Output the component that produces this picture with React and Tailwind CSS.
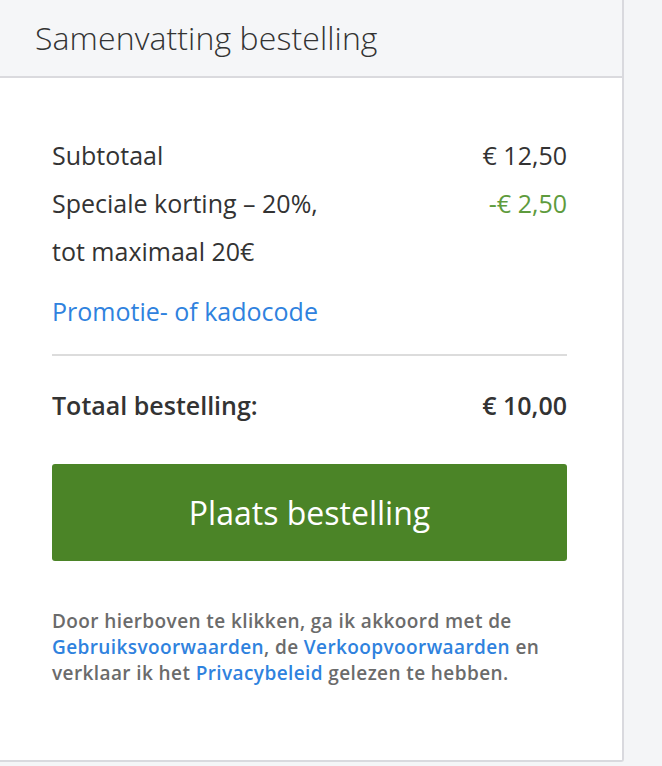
import React from 'react';

const font = { fontFamily: '"Open Sans", "Noto Sans", sans-serif' };

export default function App() {
  return (
    <div className="min-h-screen bg-[#f4f5f7]" style={font}>
      <div className="w-[624px] h-[762px] bg-white border-r-2 border-b-2 border-[#d9d9de] rounded-br-[3px]">
        {/* header */}
        <div className="h-[78px] bg-[#f5f6f8] border-b-2 border-[#dadade] pl-[35px] flex items-center">
          <h2 className="text-[32px] font-light text-[#333] tracking-[0.1px]">Samenvatting bestelling</h2>
        </div>

        <div className="pl-[52px] pr-[55px] pt-[53px] text-[#333]">
          <div className="flex justify-between text-[25px] leading-[48px]">
            <span>Subtotaal</span>
            <span>€ 12,50</span>
          </div>
          <div className="flex justify-between text-[25px] leading-[48px]">
            <span className="max-w-[300px]">Speciale korting – 20%, tot maximaal 20€</span>
            <span className="text-[#5e9b3d]">-€ 2,50</span>
          </div>
          <a href="#" className="block mt-[12px] text-[25px] leading-[48px] text-[#2f82de]">Promotie- of kadocode</a>

          <div className="mt-[19px] h-[2px] bg-[#dcdcdc]" />

          <div className="mt-[25px] flex justify-between text-[25px] leading-[48px] font-semibold">
            <span>Totaal bestelling:</span>
            <span>€ 10,00</span>
          </div>

          <button className="mt-[35px] w-full h-[97px] rounded-[3px] bg-[#4b8427] text-white text-[32px] font-normal">
            Plaats bestelling
          </button>

          <p className="mt-[47px] text-[19px] leading-[26px] font-semibold tracking-[0.4px] text-[#6b6b6b]">
            Door hierboven te klikken, ga ik akkoord met de{' '}
            <a href="#" className="text-[#2f82de]">Gebruiksvoorwaarden</a>, de{' '}
            <a href="#" className="text-[#2f82de]">Verkoopvoorwaarden</a> en verklaar ik het{' '}
            <a href="#" className="text-[#2f82de]">Privacybeleid</a> gelezen te hebben.
          </p>
        </div>
      </div>
    </div>
  );
}
